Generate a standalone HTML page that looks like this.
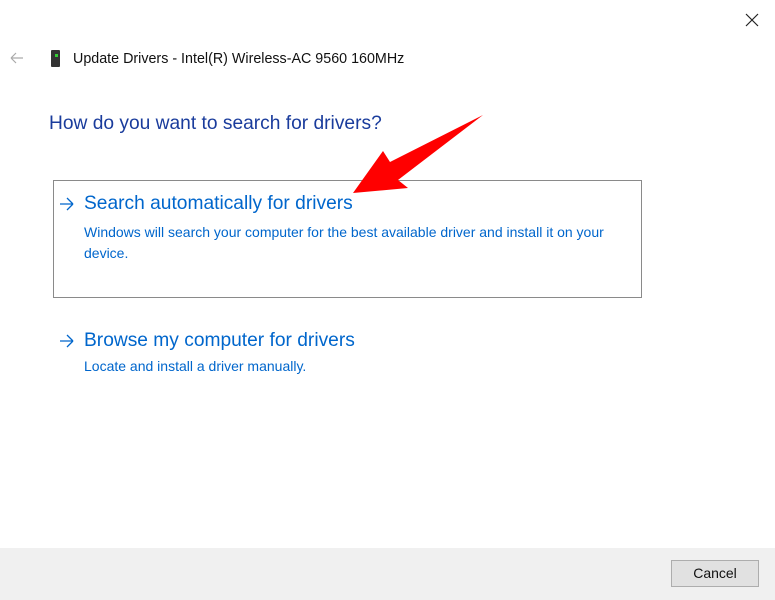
<!DOCTYPE html>
<html><head><style>
body{margin:0;width:775px;height:600px;background:#fff;position:relative;overflow:hidden;font-family:"Liberation Sans",sans-serif;}
.a{position:absolute;white-space:nowrap;}
</style></head><body>
<svg class="a" style="left:744px;top:12px" width="16" height="16"><path d="M2 2L14 14M14 2L2 14" stroke="#222" stroke-width="1.2"/></svg>
<svg class="a" style="left:10px;top:52px" width="14" height="12"><path d="M1 6H13M1 6L6 1M1 6L6 11" stroke="#aaa" stroke-width="1.2" fill="none"/></svg>
<div class="a" style="left:51px;top:50px;width:9px;height:17px;background:#333;border-radius:1px"></div>
<div class="a" style="left:55px;top:54px;width:3px;height:3px;background:#3c3"></div>
<div class="a" style="left:73px;top:51px;font-size:14.3px;color:#111">Update Drivers - Intel(R) Wireless-AC 9560 160MHz</div>
<div class="a" style="left:49px;top:113px;font-size:19.2px;color:#1a3c9c">How do you want to search for drivers?</div>
<div class="a" style="left:53px;top:180px;width:587px;height:116px;border:1px solid #8a8a8a"></div>
<svg class="a" style="left:59px;top:197px" width="16" height="14"><path d="M1 7H14M14 7L8 1M14 7L8 13" stroke="#0066cc" stroke-width="1.3" fill="none"/></svg>
<div class="a" style="left:84px;top:193px;font-size:19.2px;color:#0066cc">Search automatically for drivers</div>
<div class="a" style="left:84px;top:222px;font-size:14px;color:#0066cc;line-height:21px;white-space:normal;width:540px">Windows will search your computer for the best available driver and install it on your device.</div>
<svg class="a" style="left:59px;top:334px" width="16" height="14"><path d="M1 7H14M14 7L8 1M14 7L8 13" stroke="#0066cc" stroke-width="1.3" fill="none"/></svg>
<div class="a" style="left:84px;top:330px;font-size:19.2px;color:#0066cc">Browse my computer for drivers</div>
<div class="a" style="left:84px;top:358px;font-size:14px;color:#0066cc">Locate and install a driver manually.</div>
<svg class="a" style="left:0;top:0" width="775" height="600"><polygon points="353,193 383,151 390,162 483,115 398,180 408,188" fill="#ff0000"/></svg>
<div class="a" style="left:0;top:548px;width:775px;height:52px;background:#f0f0f0"></div>
<div class="a" style="left:671px;top:560px;width:88px;height:27px;background:#e1e1e1;border:1px solid #adadad;box-sizing:border-box;text-align:center;line-height:25px;font-size:14px;color:#111">Cancel</div>
</body></html>
